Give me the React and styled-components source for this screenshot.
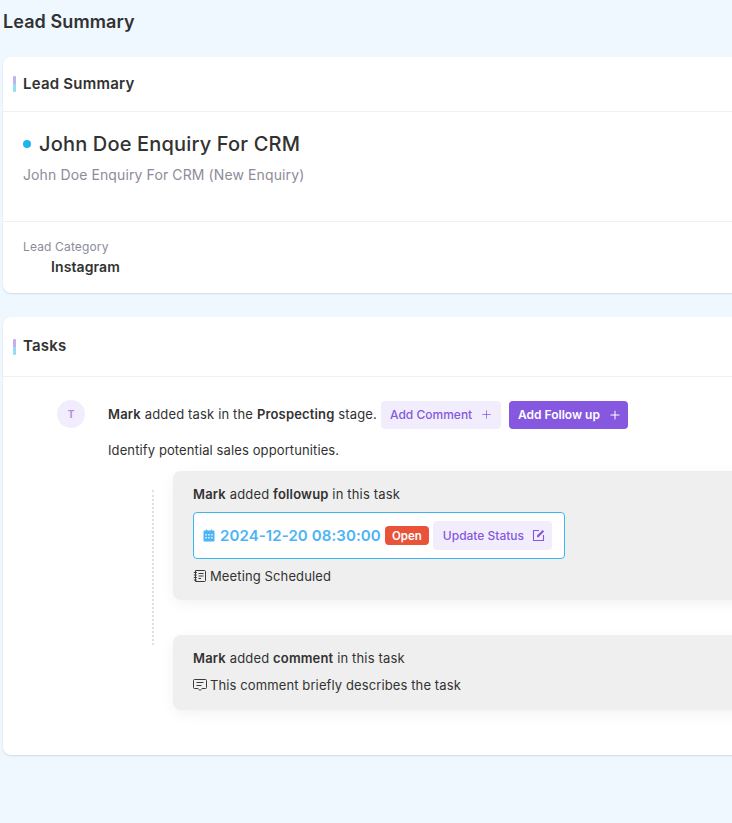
import React from "react";
import styled, { createGlobalStyle } from "styled-components";
import { Plus } from "lucide-react";

const Global = createGlobalStyle`
  html, body { margin: 0; padding: 0; background: #eff7ff; }
  body { font-family: Inter, "Liberation Sans", sans-serif; color: #323232; overflow: hidden; }
`;

const Page = styled.div`
  width: 732px;
  height: 823px;
  overflow: hidden;
  padding-left: 3px;
  box-sizing: border-box;
`;
const PageTitle = styled.h1`
  margin: 0;
  height: 57px;
  padding-top: 11px;
  box-sizing: border-box;
  font-size: 18px;
  line-height: 22px;
  font-weight: 600;
  letter-spacing: 0.08px;
`;
const Card = styled.section`
  width: 790px;
  background: #fff;
  border-radius: 8px;
  box-shadow: 0 1px 2px rgba(40, 60, 90, 0.14);
  margin-bottom: 24px;
`;
const CardHead = styled.div`
  height: ${(p) => p.$h}px;
  border-bottom: 1px solid #f0f0f0;
  display: flex;
  align-items: center;
  padding-left: 10px;
  gap: 7px;
  font-size: 15px;
  font-weight: 600;
  letter-spacing: 0.22px;
`;
const HeadText = styled.span`
  margin-bottom: ${(p) => p.$up}px;
`;
const Accent = styled.span`
  width: 3px;
  height: 16px;
  border-radius: 1px;
  background: linear-gradient(180deg, #c4b0ee 50%, #94def2 50%);
`;
const Summary = styled.div`
  height: 110px;
  padding: 19px 20px 0;
  box-sizing: border-box;
  border-bottom: 1px solid #f0f0f0;
`;
const TitleRow = styled.div`
  display: flex;
  align-items: center;
  gap: 8px;
  font-size: 20px;
  line-height: 26px;
  font-weight: 500;
  letter-spacing: 0.17px;
`;
const Dot = styled.span`
  width: 8px;
  height: 8px;
  border-radius: 50%;
  background: #1fb5e6;
`;
const Sub = styled.div`
  margin-top: 8px;
  font-size: 14px;
  line-height: 20px;
  color: #8c8c99;
  letter-spacing: 0.11px;
`;
const Meta = styled.div`
  height: 71px;
  padding: 17px 20px 0;
  box-sizing: border-box;
`;
const MetaLabel = styled.div`
  font-size: 12px;
  line-height: 15px;
  color: #8c8c99;
  letter-spacing: 0.15px;
`;
const MetaValue = styled.div`
  margin: 4px 0 0 28px;
  font-size: 14px;
  line-height: 17px;
  font-weight: 600;
  letter-spacing: 0.1px;
`;
const TaskBody = styled.div`
  padding: 23px 0 45px 54px;
  display: grid;
  grid-template-columns: 28px 1fr;
  column-gap: 23px;
`;
const Avatar = styled.div`
  width: 28px;
  height: 28px;
  border-radius: 50%;
  background: #f2edfc;
  color: #b08ee8;
  display: flex;
  align-items: center;
  justify-content: center;
  font-size: 10px;
  font-weight: 700;
  padding-bottom: 1px;
  box-sizing: border-box;
`;
const Line = styled.div`
  display: flex;
  align-items: center;
  font-size: 13px;
  line-height: 20px;
  white-space: pre;
  letter-spacing: ${(p) => p.$ls || 0.16}px;
  margin-top: ${(p) => p.$mt || 0}px;
  b { font-weight: 600; }
`;
const TaskLine = styled(Line)`
  height: 30px;
  box-sizing: border-box;
  padding-top: 1px;
  align-items: flex-start;
  line-height: 26px;
`;
const Btn = styled.button`
  border: 0;
  border-radius: 4px;
  height: ${(p) => p.$h || 28}px;
  width: ${(p) => p.$w}px;
  margin-left: ${(p) => p.$ml || 0}px;
  padding: 0 0 ${(p) => (p.$h ? 0 : 1)}px ${(p) => p.$pl || 9}px;
  display: inline-flex;
  align-items: center;
  justify-content: flex-start;
  gap: ${(p) => p.$gap || 8}px;
  font-family: inherit;
  font-size: 12px;
  letter-spacing: 0;
  font-weight: ${(p) => (p.$solid ? 600 : 450)};
  color: ${(p) => (p.$solid ? "#fff" : "#8558df")};
  background: ${(p) => (p.$solid ? "#8558df" : "#f2edfc")};
`;
const Thread = styled.div`
  margin-top: 11px;
  margin-left: 65px;
  position: relative;
`;
const Dotted = styled.span`
  position: absolute;
  left: -21px;
  top: 19px;
  height: 155px;
  border-left: 2px dotted #e0e0e0;
`;
const Note = styled.div`
  background: #efefef;
  border-radius: 8px;
  padding: ${(p) => p.$pad};
  box-shadow: 0 4px 14px rgba(0, 0, 0, 0.05);
  margin-bottom: ${(p) => p.$mb || 0}px;
`;
const DateBox = styled.div`
  width: 372px;
  height: 47px;
  margin: 8px 0 7px;
  box-sizing: border-box;
  background: #fff;
  border: 1px solid #3db5f5;
  border-radius: 4px;
  display: flex;
  align-items: center;
  padding-left: 9px;
`;
const DateText = styled.span`
  font-size: 15px;
  font-weight: 600;
  color: #4cb4f5;
  margin-left: 5px;
  letter-spacing: 0.1px;
`;
const Badge = styled.span`
  margin-left: 4px;
  width: 44px;
  height: 19px;
  border-radius: 4px;
  background: #e8533a;
  color: #fff;
  font-size: 11.5px;
  font-weight: 600;
  display: inline-flex;
  align-items: center;
  justify-content: center;
`;
const NoteIcon = styled.svg`
  margin-right: 3px;
  flex: none;
`;

const App = () => (
  <Page>
    <Global />
    <PageTitle>Lead Summary</PageTitle>
    <Card>
      <CardHead $h={54}><Accent /><HeadText $up={1}>Lead Summary</HeadText></CardHead>
      <Summary>
        <TitleRow><Dot />John Doe Enquiry For CRM</TitleRow>
        <Sub>John Doe Enquiry For CRM (New Enquiry)</Sub>
      </Summary>
      <Meta>
        <MetaLabel>Lead Category</MetaLabel>
        <MetaValue>Instagram</MetaValue>
      </Meta>
    </Card>
    <Card>
      <CardHead $h={59}><Accent /><HeadText $up={2}>Tasks</HeadText></CardHead>
      <TaskBody>
        <Avatar>T</Avatar>
        <div>
          <TaskLine>
            <b>Mark</b> added task in the <b>Prospecting</b> stage.
            <Btn $w={120} $ml={4}>Add Comment<Plus size={13} strokeWidth={1.4} /></Btn>
            <Btn $w={119} $ml={8} $solid>Add Follow up<Plus size={14} strokeWidth={1.8} /></Btn>
          </TaskLine>
          <Line $mt={10} $ls={0.11}>Identify potential sales opportunities.</Line>
          <Thread>
            <Dotted />
            <Note $pad="13px 20px 14px" $mb={35}>
              <Line><b>Mark</b> added <b>followup</b> in this task</Line>
              <DateBox>
                <svg width="12" height="13" viewBox="0 0 12 13">
                  <path fill="#4cb4f5" d="M1.5 1.5H3V.5h1.2v1h3.6v-1H9v1h1.5A1 1 0 0 1 11.5 2.5v9a1 1 0 0 1-1 1h-9a1 1 0 0 1-1-1v-9a1 1 0 0 1 1-1Z" />
                  <path fill="#fff" fillOpacity="0.75" d="M2.2 5h1.7v1.5H2.2zM5.1 5h1.8v1.5H5.1zM8.1 5h1.7v1.5H8.1zM2.2 8h1.7v1.5H2.2zM5.1 8h1.8v1.5H5.1zM8.1 8h1.7v1.5H8.1z" />
                </svg>
                <DateText>2024-12-20 08:30:00</DateText>
                <Badge>Open</Badge>
                <Btn $w={119} $h={29} $ml={4} $pl={10} $gap={8}>
                  Update Status
                  <svg width="13" height="13" viewBox="0 0 13 13" fill="none" stroke="#8558df" strokeWidth="1.1">
                    <path d="M7 1.5H1.5v10h10V6" />
                    <path d="M5 8.2V6.6L10.6 1l1.5 1.5L6.5 8.2Z" fill="#8558df" stroke="none" />
                  </svg>
                </Btn>
              </DateBox>
              <Line $ls={0.12}>
                <NoteIcon width="14" height="14" viewBox="0 0 14 14" fill="none" stroke="#3a3a3a" strokeWidth="1">
                  <path d="M2.5 1.5h9a1 1 0 0 1 1 1v9a1 1 0 0 1-1 1h-9Z" />
                  <path d="M.8 3.5h3M.8 6h3M.8 8.5h3M.8 11h3M5.5 4.5h5M5.5 7h5M5.5 9.5h2.5" />
                </NoteIcon>
                Meeting Scheduled
              </Line>
            </Note>
            <Note $pad="13px 20px 15px">
              <Line><b>Mark</b> added <b>comment</b> in this task</Line>
              <Line $mt={7} $ls={0.11}>
                <NoteIcon width="14" height="14" viewBox="0 0 14 14" fill="none" stroke="#3a3a3a" strokeWidth="1">
                  <path d="M1.5 1.5h11a1 1 0 0 1 1 1v7a1 1 0 0 1-1 1H9l-2 2-2-2H1.5a1 1 0 0 1-1-1v-7a1 1 0 0 1 1-1Z" />
                  <path d="M3.5 4.5h7M3.5 7.5h5" />
                </NoteIcon>
                This comment briefly describes the task
              </Line>
            </Note>
          </Thread>
        </div>
      </TaskBody>
    </Card>
  </Page>
);

export default App;
